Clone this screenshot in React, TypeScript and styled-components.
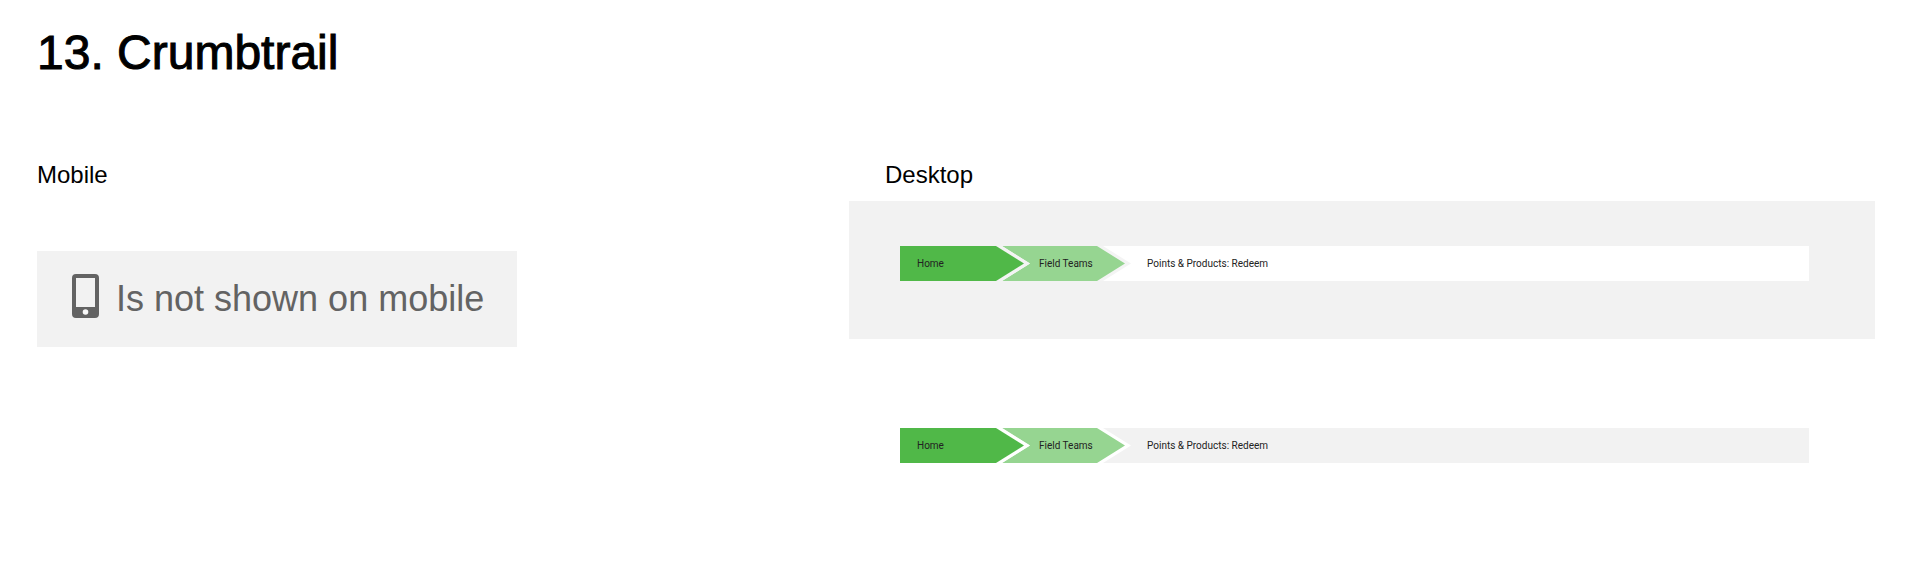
import React from "react";
import styled, { createGlobalStyle } from "styled-components";

const Global = createGlobalStyle`
  *, *::before, *::after { box-sizing: border-box; }
  body { margin: 0; background: #fff; color: #000; font-family: "Liberation Sans", Arial, sans-serif; }
`;

const Page = styled.main`
  padding: 25px 45px 80px 37px;
`;

const Title = styled.h1`
  margin: 0;
  font-size: 48px;
  line-height: 56px;
  font-weight: 400;
  -webkit-text-stroke: 1px #000;
`;

const Columns = styled.div`
  display: grid;
  grid-template-columns: 812fr 1026fr;
  margin-top: 78px;
`;

const Heading = styled.h2<{ $indent?: boolean }>`
  margin: 0;
  padding-left: ${(p) => (p.$indent ? 36 : 0)}px;
  font-size: 24px;
  line-height: 32px;
  font-weight: 400;
`;

const Notice = styled.p`
  display: inline-flex;
  align-items: center;
  gap: 17px;
  height: 96px;
  margin: 60px 0 0;
  padding: 0 33px 0 35px;
  background: #f2f2f2;
  color: #636363;
  font-size: 36px;
  line-height: 40px;
  white-space: nowrap;
`;

const PhoneIcon = styled.svg`
  width: 27px;
  height: 44px;
  flex: none;
  margin-bottom: 6px;
`;

const Panel = styled.div<{ $shaded?: boolean }>`
  margin-top: ${(p) => (p.$shaded ? 10 : 0)}px;
  padding: ${(p) => (p.$shaded ? "45px 66px 58px 51px" : "89px 66px 0 51px")};
  background: ${(p) => (p.$shaded ? "#f2f2f2" : "#fff")};
`;

const Trail = styled.ol<{ $track: string }>`
  display: flex;
  height: 35px;
  margin: 0;
  padding: 0;
  list-style: none;
  background: ${(p) => p.$track};
  color: #222;
  font-family: Roboto, sans-serif;
  font-size: 10px;
  line-height: 35px;
  white-space: nowrap;
`;

const outline = (first?: boolean) =>
  `polygon(0 0, calc(100% - 28px) 0, 100% 50%, calc(100% - 28px) 100%, 0 100%${first ? "" : ", 28px 50%"})`;

const Crumb = styled.li<{ $gap: string; $first?: boolean }>`
  width: ${(p) => (p.$first ? 130 : 129)}px;
  margin-right: -28px;
  background: ${(p) => p.$gap};
  clip-path: ${(p) => outline(p.$first)};
`;

const CrumbLink = styled.a<{ $fill: string; $first?: boolean }>`
  display: block;
  height: 35px;
  margin-right: 6px;
  padding-left: ${(p) => (p.$first ? 17 : 37)}px;
  background: ${(p) => p.$fill};
  color: inherit;
  text-decoration: none;
  clip-path: ${(p) => outline(p.$first)};
`;

const Current = styled.li`
  padding-left: 44px;
`;

function Crumbtrail({ track, gap }: { track: string; gap: string }) {
  return (
    <nav aria-label="Crumbtrail">
      <Trail $track={track}>
        <Crumb $gap={gap} $first>
          <CrumbLink href="#home" $fill="#50b848" $first>Home</CrumbLink>
        </Crumb>
        <Crumb $gap={gap}>
          <CrumbLink href="#field-teams" $fill="#96d591">Field Teams</CrumbLink>
        </Crumb>
        <Current aria-current="page">Points &amp; Products: Redeem</Current>
      </Trail>
    </nav>
  );
}

export default function App() {
  return (
    <>
      <Global />
      <Page>
        <Title>13. Crumbtrail</Title>
        <Columns>
          <section>
            <Heading>Mobile</Heading>
            <Notice>
              <PhoneIcon viewBox="0 0 27 44" aria-hidden="true">
                <path
                  fill="#636363"
                  fillRule="evenodd"
                  d="M4 0h19a4 4 0 0 1 4 4v36a4 4 0 0 1-4 4H4a4 4 0 0 1-4-4V4a4 4 0 0 1 4-4zM4 4v29h19V4z"
                />
                <circle cx="13.5" cy="38" r="2.8" fill="#f8f8f8" />
              </PhoneIcon>
              Is not shown on mobile
            </Notice>
          </section>
          <section>
            <Heading $indent>Desktop</Heading>
            <Panel $shaded>
              <Crumbtrail track="#fff" gap="#f4f4f4" />
            </Panel>
            <Panel>
              <Crumbtrail track="#f2f2f2" gap="#fff" />
            </Panel>
          </section>
        </Columns>
      </Page>
    </>
  );
}
